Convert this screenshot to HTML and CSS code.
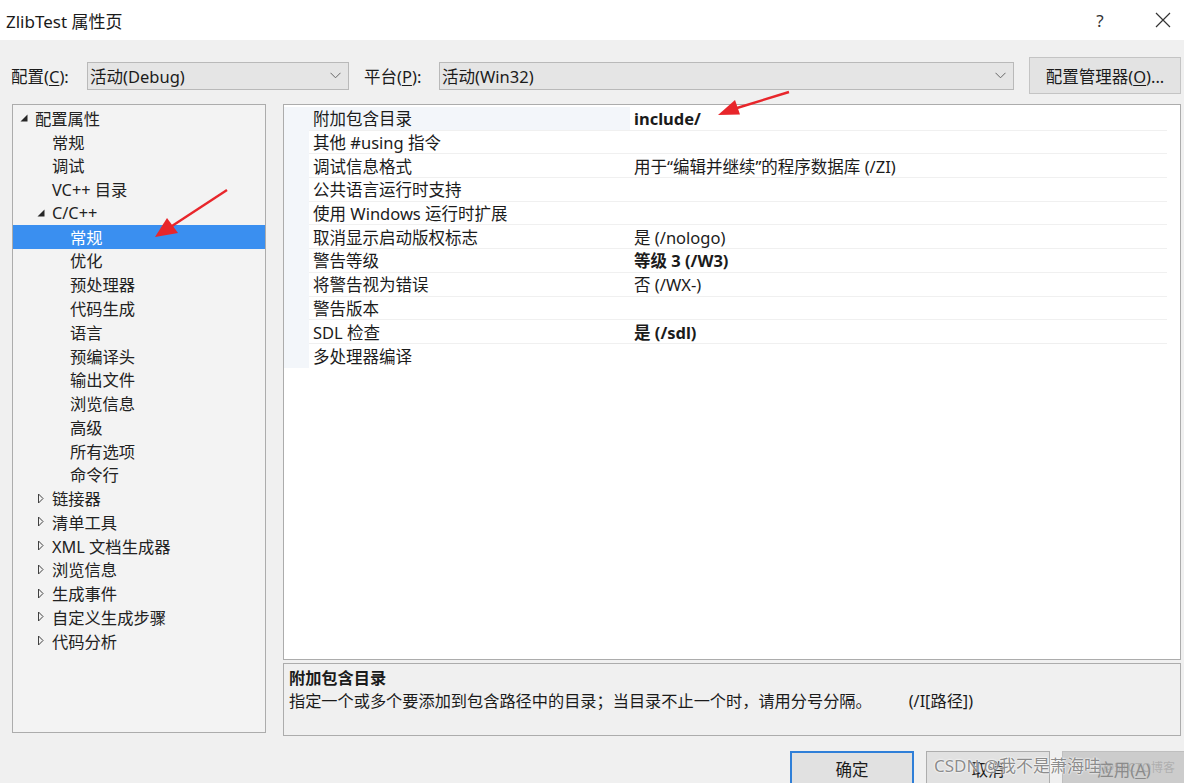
FILE: index.html
```html
<!DOCTYPE html>
<html lang="zh-CN">
<head>
<meta charset="utf-8">
<title>ZlibTest 属性页</title>
<link rel="stylesheet" href="styles.css">
</head>
<body>
<div class="dialog">
  <div class="titlebar">
    <span class="title">ZlibTest 属性页</span>
    <div class="tb-btns">
      <span class="help">?</span>
      <svg class="close" width="16" height="16" viewBox="0 0 16 16"><path d="M1 1 L15 15 M15 1 L1 15" stroke="#333" stroke-width="1.2" fill="none"/></svg>
    </div>
  </div>

  <div class="content">
    <div class="config-row">
      <span class="lbl lbl-config">配置(<u>C</u>):</span>
      <div class="combo combo-config">
        <span>活动(Debug)</span>
        <svg class="chev" width="11" height="7" viewBox="0 0 11 7"><path d="M0.5 0.8 L5.5 5.8 L10.5 0.8" stroke="#666" stroke-width="1" fill="none"/></svg>
      </div>
      <span class="lbl lbl-platform">平台(<u>P</u>):</span>
      <div class="combo combo-platform">
        <span>活动(Win32)</span>
        <svg class="chev" width="11" height="7" viewBox="0 0 11 7"><path d="M0.5 0.8 L5.5 5.8 L10.5 0.8" stroke="#666" stroke-width="1" fill="none"/></svg>
      </div>
      <button class="btn btn-cfgmgr">配置管理器(<u>O</u>)...</button>
    </div>

    <div class="main">
      <div class="tree">
        <div class="node l0"><span class="glyph"><svg width="8" height="8" viewBox="0 0 8 8"><path d="M7.5 0.5 L7.5 7.5 L0.5 7.5 Z" fill="#262626"/></svg></span><span>配置属性</span></div>
        <div class="node l1"><span class="glyph"></span><span>常规</span></div>
        <div class="node l1"><span class="glyph"></span><span>调试</span></div>
        <div class="node l1"><span class="glyph"></span><span>VC++ 目录</span></div>
        <div class="node l1"><span class="glyph"><svg width="8" height="8" viewBox="0 0 8 8"><path d="M7.5 0.5 L7.5 7.5 L0.5 7.5 Z" fill="#262626"/></svg></span><span>C/C++</span></div>
        <div class="node l2 selected"><span class="glyph"></span><span>常规</span></div>
        <div class="node l2"><span class="glyph"></span><span>优化</span></div>
        <div class="node l2"><span class="glyph"></span><span>预处理器</span></div>
        <div class="node l2"><span class="glyph"></span><span>代码生成</span></div>
        <div class="node l2"><span class="glyph"></span><span>语言</span></div>
        <div class="node l2"><span class="glyph"></span><span>预编译头</span></div>
        <div class="node l2"><span class="glyph"></span><span>输出文件</span></div>
        <div class="node l2"><span class="glyph"></span><span>浏览信息</span></div>
        <div class="node l2"><span class="glyph"></span><span>高级</span></div>
        <div class="node l2"><span class="glyph"></span><span>所有选项</span></div>
        <div class="node l2"><span class="glyph"></span><span>命令行</span></div>
        <div class="node l1"><span class="glyph"><svg class="collapsed" width="7" height="11" viewBox="0 0 7 11"><path d="M1.5 1 L6 5.5 L1.5 10 Z" fill="none" stroke="#404040" stroke-width="1"/></svg></span><span>链接器</span></div>
        <div class="node l1"><span class="glyph"><svg class="collapsed" width="7" height="11" viewBox="0 0 7 11"><path d="M1.5 1 L6 5.5 L1.5 10 Z" fill="none" stroke="#404040" stroke-width="1"/></svg></span><span>清单工具</span></div>
        <div class="node l1"><span class="glyph"><svg class="collapsed" width="7" height="11" viewBox="0 0 7 11"><path d="M1.5 1 L6 5.5 L1.5 10 Z" fill="none" stroke="#404040" stroke-width="1"/></svg></span><span>XML 文档生成器</span></div>
        <div class="node l1"><span class="glyph"><svg class="collapsed" width="7" height="11" viewBox="0 0 7 11"><path d="M1.5 1 L6 5.5 L1.5 10 Z" fill="none" stroke="#404040" stroke-width="1"/></svg></span><span>浏览信息</span></div>
        <div class="node l1"><span class="glyph"><svg class="collapsed" width="7" height="11" viewBox="0 0 7 11"><path d="M1.5 1 L6 5.5 L1.5 10 Z" fill="none" stroke="#404040" stroke-width="1"/></svg></span><span>生成事件</span></div>
        <div class="node l1"><span class="glyph"><svg class="collapsed" width="7" height="11" viewBox="0 0 7 11"><path d="M1.5 1 L6 5.5 L1.5 10 Z" fill="none" stroke="#404040" stroke-width="1"/></svg></span><span>自定义生成步骤</span></div>
        <div class="node l1"><span class="glyph"><svg class="collapsed" width="7" height="11" viewBox="0 0 7 11"><path d="M1.5 1 L6 5.5 L1.5 10 Z" fill="none" stroke="#404040" stroke-width="1"/></svg></span><span>代码分析</span></div>
      </div>

      <div class="right">
        <div class="grid">
          <div class="prow current"><span class="margin"></span><span class="pname">附加包含目录</span><span class="pval bold">include/</span></div>
          <div class="prow"><span class="margin"></span><span class="pname">其他 #using 指令</span><span class="pval"></span></div>
          <div class="prow"><span class="margin"></span><span class="pname">调试信息格式</span><span class="pval">用于“编辑并继续”的程序数据库 (/ZI)</span></div>
          <div class="prow"><span class="margin"></span><span class="pname">公共语言运行时支持</span><span class="pval"></span></div>
          <div class="prow"><span class="margin"></span><span class="pname">使用 Windows 运行时扩展</span><span class="pval"></span></div>
          <div class="prow"><span class="margin"></span><span class="pname">取消显示启动版权标志</span><span class="pval">是 (/nologo)</span></div>
          <div class="prow"><span class="margin"></span><span class="pname">警告等级</span><span class="pval bold">等级 3 (/W3)</span></div>
          <div class="prow"><span class="margin"></span><span class="pname">将警告视为错误</span><span class="pval">否 (/WX-)</span></div>
          <div class="prow"><span class="margin"></span><span class="pname">警告版本</span><span class="pval"></span></div>
          <div class="prow"><span class="margin"></span><span class="pname">SDL 检查</span><span class="pval bold">是 (/sdl)</span></div>
          <div class="prow last"><span class="margin"></span><span class="pname">多处理器编译</span><span class="pval"></span></div>
        </div>
        <div class="desc">
          <div class="desc-title">附加包含目录</div>
          <div class="desc-text">指定一个或多个要添加到包含路径中的目录；当目录不止一个时，请用分号分隔。<span class="switch">(/I[路径])</span></div>
        </div>
      </div>
    </div>

    <div class="footer">
      <button class="btn btn-ok">确定</button>
      <button class="btn">取消</button>
      <button class="btn btn-disabled">应用(<u>A</u>)</button>
    </div>
  </div>

  <svg class="arrows" width="1184" height="783" viewBox="0 0 1184 783">
    <line x1="789" y1="92" x2="737" y2="108" stroke="#e8262b" stroke-width="2.4"/>
    <polygon points="718,115 740,114.5 735,100" fill="#e8262b"/>
    <line x1="227" y1="190" x2="172" y2="226" stroke="#e8262b" stroke-width="2.4"/>
    <polygon points="155,237 167,218 178,233" fill="#e8262b"/>
  </svg>

  <div class="watermark"><span class="wm-main">CSDN @我不是萧海哇</span><span class="wm-sub">@51CTO博客</span></div>
</div>
</body>
</html>
```

FILE: styles.css
```css
* { box-sizing: border-box; }

html, body {
  margin: 0;
  padding: 0;
  width: 1184px;
  height: 783px;
  overflow: hidden;
  background: #f0f0f0;
  font-family: "Noto Sans", "Noto Sans CJK SC", sans-serif;
  color: #1b1b1b;
}

.dialog {
  position: relative;
  width: 1184px;
  height: 783px;
  display: flex;
  flex-direction: column;
}

/* title bar */
.titlebar {
  height: 40px;
  background: #ffffff;
  display: flex;
  align-items: center;
  justify-content: space-between;
  padding-left: 6px;
  flex-shrink: 0;
}
.title {
  font-size: 17px;
  color: #1a1a1a;
}
.tb-btns {
  display: flex;
  align-items: center;
}
.help {
  font-size: 17px;
  color: #333;
  width: 20px;
  text-align: center;
  margin-right: 45px;
}
.close {
  margin-right: 13px;
}

/* content */
.content {
  flex: 1;
  display: flex;
  flex-direction: column;
}

.config-row {
  display: flex;
  align-items: center;
  height: 37px;
  margin-top: 17px;
  padding-left: 11px;
  font-size: 16.5px;
}
.lbl { flex-shrink: 0; }
.lbl-config { width: 76px; }
.lbl-platform { width: 75px; margin-left: 15px; }
u { text-decoration: underline; text-underline-offset: 2px; }

.combo {
  height: 28px;
  background: #e5e5e5;
  border: 1px solid #b9b9b9;
  display: flex;
  align-items: center;
  justify-content: space-between;
  padding-left: 2px;
  padding-right: 7px;
  flex-shrink: 0;
}
.combo-config { width: 262px; }
.combo-platform { width: 575px; }

.btn {
  font-family: inherit;
  font-size: 16.5px;
  color: #1b1b1b;
  background: #e1e1e1;
  border: 1px solid #adadad;
  padding: 0;
  height: 36px;
  width: 124px;
}
.btn-cfgmgr {
  width: 152px;
  height: 37px;
  margin-left: 15px;
  border-color: #c4c4c4;
  background: #e3e3e3;
}

/* main area */
.main {
  display: flex;
  margin-top: 10px;
  padding-left: 12px;
  gap: 17px;
}

.tree {
  width: 254px;
  height: 629px;
  background: #f3f3f3;
  border: 1px solid #acacac;
  padding-top: 1px;
  font-size: 16.3px;
  flex-shrink: 0;
}
.node {
  height: 23.77px;
  display: flex;
  align-items: center;
  color: #222;
  white-space: nowrap;
}
.node.l0 { padding-left: 7px; }
.node.l1 { padding-left: 24px; }
.node.l2 { padding-left: 42px; }
.glyph {
  width: 15px;
  display: flex;
  align-items: center;
  flex-shrink: 0;
}
.node.selected {
  background: #3a8ff0;
  color: #ffffff;
}

.right {
  width: 898px;
  display: flex;
  flex-direction: column;
  gap: 3px;
}

.grid {
  height: 556px;
  background: #ffffff;
  border: 1px solid #acacac;
  padding-top: 2px;
  font-size: 16.5px;
}
.prow {
  width: 883px;
  height: 23.7px;
  display: flex;
  align-items: stretch;
  white-space: nowrap;
}
.prow .margin {
  width: 25px;
  background: #f3f6fa;
  flex-shrink: 0;
}
.prow .pname {
  width: 321px;
  padding-left: 4px;
  display: flex;
  align-items: center;
  border-bottom: 1px solid #f0f0f0;
  flex-shrink: 0;
}
.prow .pval {
  flex: 1;
  padding-left: 4px;
  display: flex;
  align-items: center;
  border-bottom: 1px solid #f0f0f0;
}
.prow.last .pname,
.prow.last .pval { border-bottom: none; }
.prow.current .pname { background: #f3f6fa; }
.bold { font-weight: 700; }

.desc {
  height: 73px;
  background: #f0f0f0;
  border: 1px solid #acacac;
  padding: 3px 5px 0;
  font-size: 16.2px;
}
.desc-title {
  font-weight: 700;
  line-height: 22px;
}
.desc-text {
  line-height: 24px;
  white-space: nowrap;
}
.switch { margin-left: 37px; }

/* footer */
.footer {
  display: flex;
  justify-content: flex-end;
  gap: 12px;
  margin-top: 15px;
  margin-right: -2px;
}
.btn-ok {
  border: 2px solid #2f7fd8;
}
.btn-disabled {
  background: #cccccc;
  border-color: #bfbfbf;
  color: #8a8a8a;
}

/* overlays */
.arrows {
  position: absolute;
  left: 0;
  top: 0;
  pointer-events: none;
}
.watermark {
  position: absolute;
  left: 934px;
  top: 752px;
  display: flex;
  align-items: baseline;
  gap: 2px;
  pointer-events: none;
  white-space: nowrap;
}
.wm-main {
  font-size: 17px;
  color: rgba(110, 110, 110, 0.8);
  text-shadow: 0 0 2px #fff, 0 0 2px #fff;
}
.wm-sub {
  font-size: 12px;
  color: rgba(150, 150, 150, 0.55);
}
```
